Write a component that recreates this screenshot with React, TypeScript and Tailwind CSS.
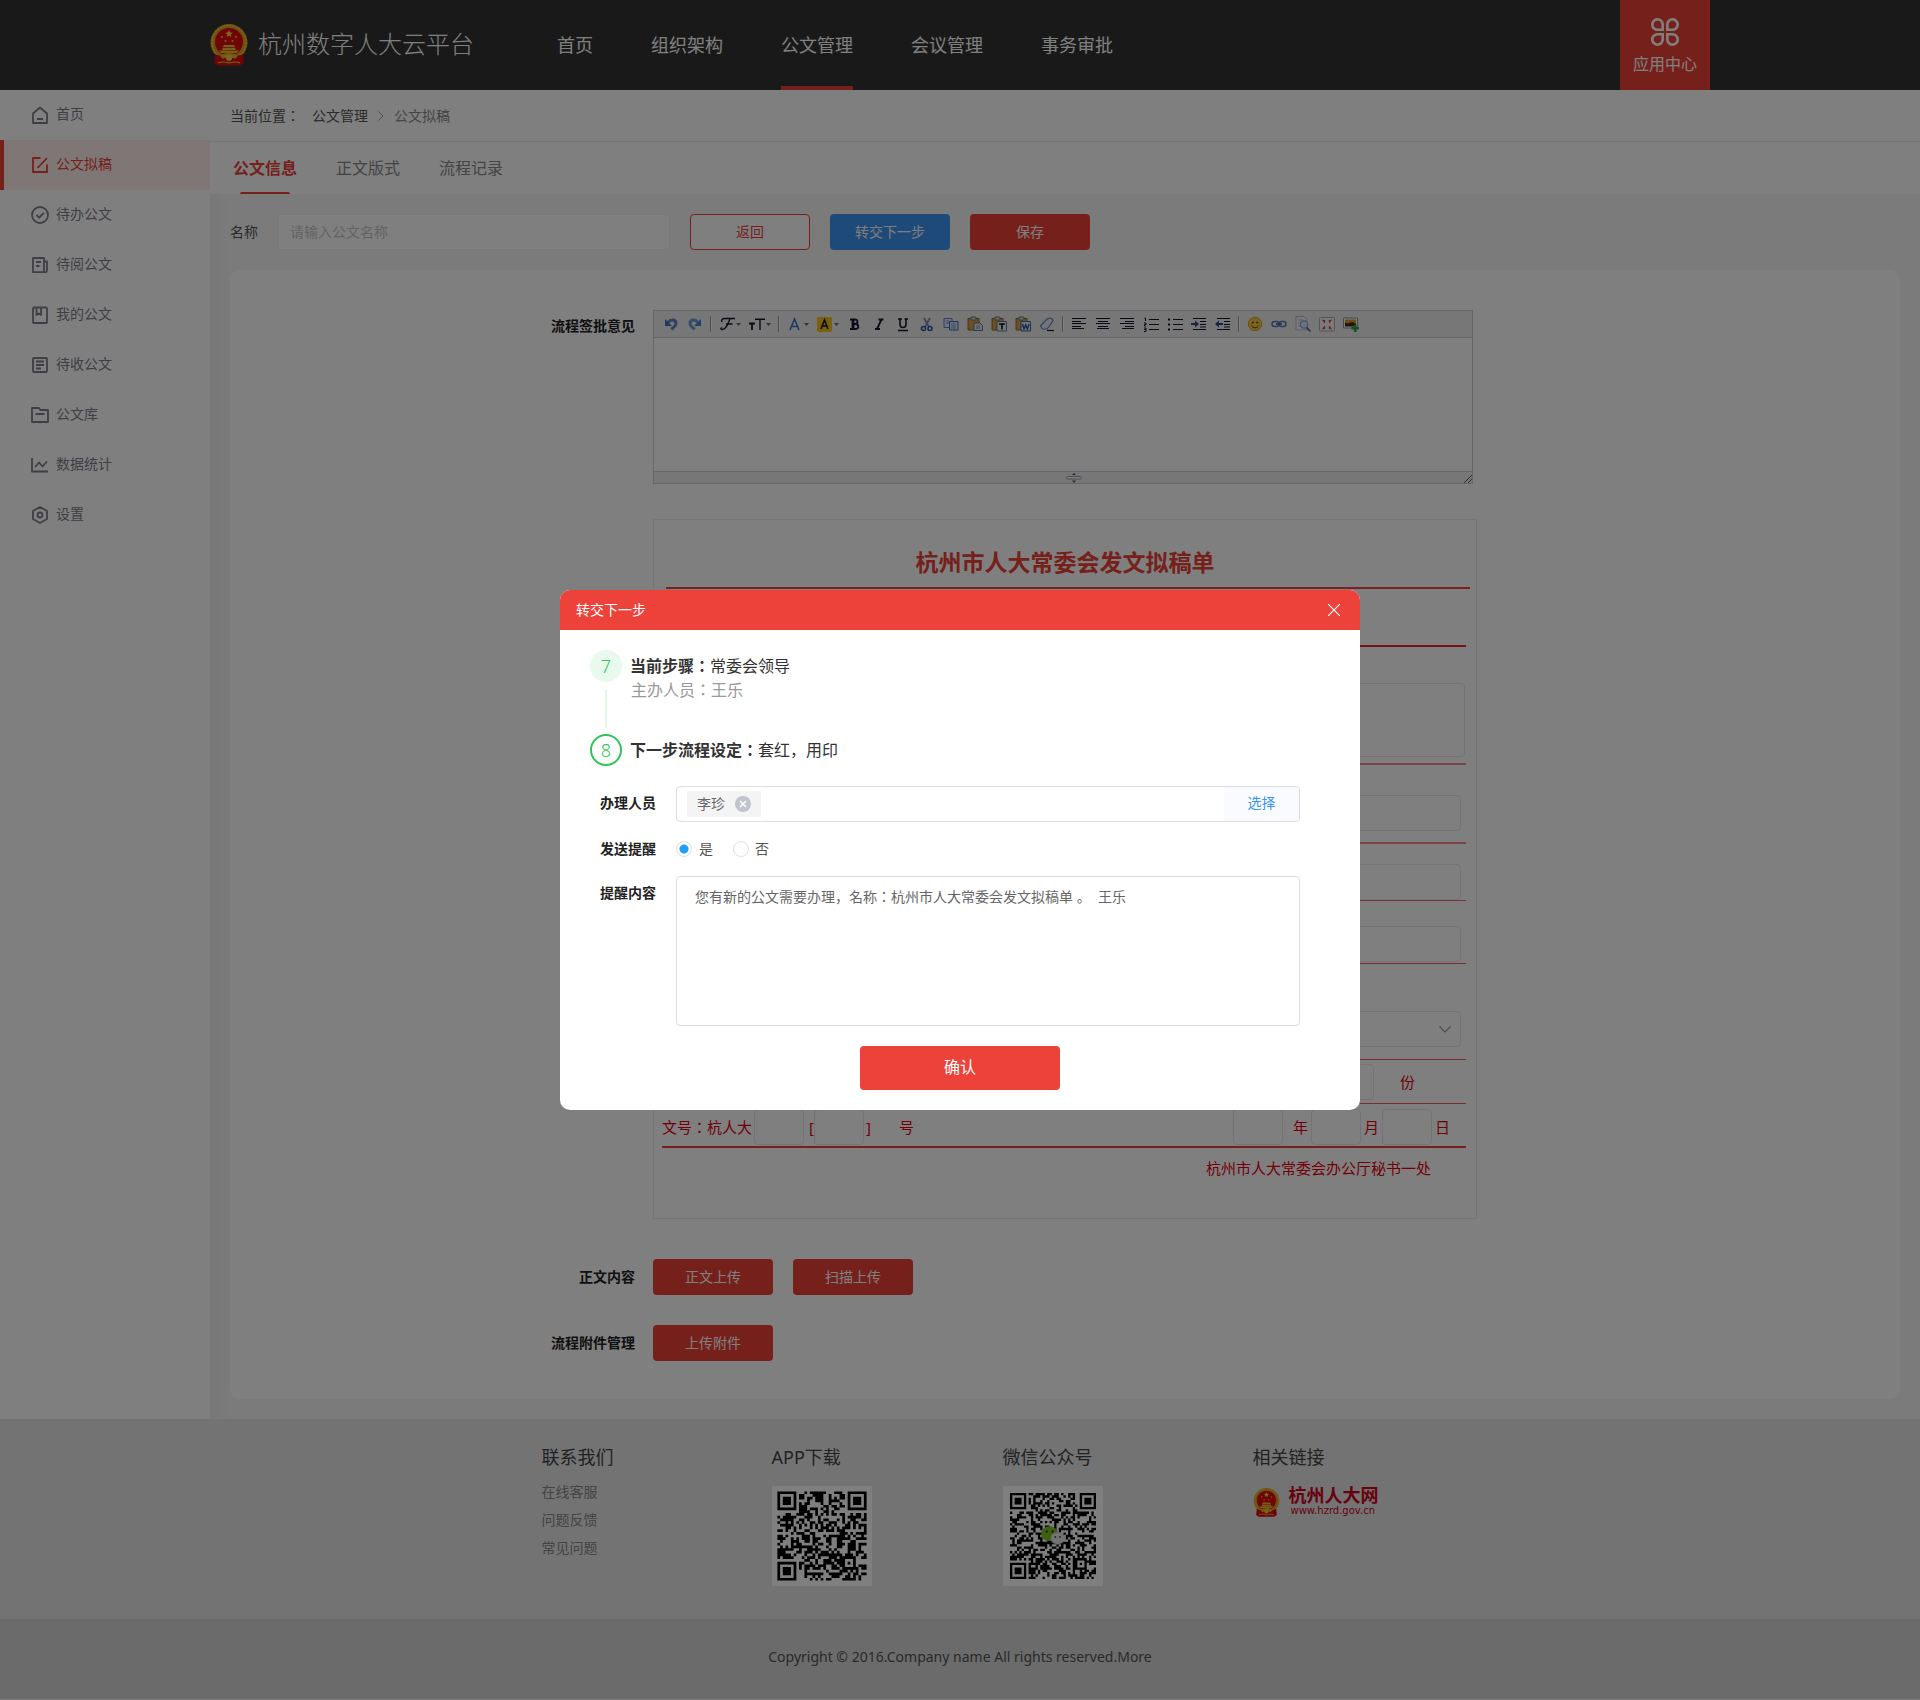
import React from "react";

const FONT = "font-['Noto_Sans','Noto_Sans_CJK_SC',sans-serif]";

/* ---------- Logos ---------- */

function Emblem({ className }: { className: string }) {
  return (
    <svg viewBox="0 0 38 42" className={className} aria-hidden="true">
      <ellipse cx="19" cy="18.5" rx="18.5" ry="18.5" fill="#d9a21b" />
      <ellipse cx="19" cy="18.5" rx="17" ry="17" fill="none" stroke="#f2cf4e" strokeWidth="1.4" strokeDasharray="2 1.2" />
      <circle cx="19" cy="18" r="14" fill="#e00a0a" />
      <path d="M19 6l1.1 2.5 2.7.2-2.1 1.8.7 2.6-2.4-1.4-2.4 1.4.7-2.6-2.1-1.8 2.7-.2z" fill="#f8d23a" />
      <g fill="#e9bd33">
        <circle cx="12" cy="13" r="1" />
        <circle cx="26" cy="13" r="1" />
        <circle cx="15.5" cy="17" r="1" />
        <circle cx="22.5" cy="17" r="1" />
        <path d="M14 21h10l1.5 2.3h-13zM12.5 24h13v2h-13zM9 26.500h20l-2 2.500H11z" />
      </g>
      <path d="M5 30c4 3 24 3 28 0l1 9-4 2.500H8L4 39z" fill="#d90b0b" />
      <path d="M10 32c4-4 14-4 18 0l-3 3c-3-2-9-2-12 0z" fill="#e6b325" />
      <circle cx="19" cy="34" r="3" fill="#f2cf4e" />
      <path d="M8 39c4-2 7-1 11 0 4-1 7-2 11 0" stroke="#f0c63d" strokeWidth="1.2" fill="none" />
    </svg>
  );
}

function QrCode({ size, quiet, seed, label, children }: { size: number; quiet: number; seed: number; label: string; children?: React.ReactNode }) {
  const finder = (x: number, y: number, ox: number, oy: number) => {
    const dx = x - ox;
    const dy = y - oy;
    if (dx < -1 || dy < -1 || dx > 7 || dy > 7) return null;
    if (dx < 0 || dy < 0 || dx > 6 || dy > 6) return false;
    const ring = Math.max(Math.abs(dx - 3), Math.abs(dy - 3));
    return ring !== 2;
  };
  let state = seed;
  let d = "";
  for (let y = 0; y < size; y++) {
    for (let x = 0; x < size; x++) {
      state = (state * 1103515245 + 12345) % 2147483648;
      const a = finder(x, y, 0, 0) ?? finder(x, y, size - 7, 0) ?? finder(x, y, 0, size - 7);
      const ring = Math.max(Math.abs(x - (size - 7)), Math.abs(y - (size - 7)));
      const on = a !== null ? a : ring <= 2 ? ring !== 1 : (state >> 16) % 100 < 52;
      if (on) d += `M${x} ${y}h1v1h-1z`;
    }
  }
  const full = size + quiet * 2;
  return (
    <svg viewBox={`${-quiet} ${-quiet} ${full} ${full}`} className="h-[100px] w-[100px] bg-white" role="img" aria-label={label}>
      <path d={d} fill="#000" />
      {children}
    </svg>
  );
}

/* Full-width colon set in the middle of its square. */
function Colon() {
  return <span className="font-['Noto_Sans_CJK_JP',sans-serif]">：</span>;
}

/* ---------- Sidebar ---------- */

const sideItems: { label: string; icon: React.ReactNode; active?: boolean }[] = [
  { label: "首页", icon: <path d="M2 7.5L9 1.5l7 6v9.500H2zM6 13h6" /> },
  { label: "公文拟稿", active: true, icon: <path d="M9.5 2H2v14h14V8.500M6.500 12L16 2" /> },
  { label: "待办公文", icon: <><circle cx="9" cy="9" r="8" /><path d="M5.500 9l2.700 2.700 4.600-4.900" /></> },
  { label: "待阅公文", icon: <path d="M13 16.200V2H2v14.200h12.500c.800 0 1.500-.700 1.500-1.500V5.500h-3M5 6h5M5 10h3.500" /> },
  { label: "我的公文", icon: <><rect x="2" y="1.500" width="14" height="15.500" rx="1" /><path d="M5.500 2v7l2.200-1.500L10 9V2" /></> },
  { label: "待收公文", icon: <><rect x="2" y="2" width="14" height="14" rx="1" /><path d="M5 5.500h8M5 9h8M5 12.500h5" /></> },
  { label: "公文库", icon: <path d="M1 2h7l1.500 2H17v12H1zM4.500 8h9" /> },
  { label: "数据统计", icon: <path d="M1 2v13.500h16M4 11l4-4.500 3.500 4L16 5.500" /> },
  { label: "设置", icon: <><path d="M9 1l7 4v8l-7 4-7-4V5z" /><circle cx="9" cy="9" r="2.500" /></> },
];

function Sidebar() {
  return (
    <aside className="w-[210px] shrink-0 bg-white">
      <nav aria-label="侧边导航">
        {sideItems.map((it) => (
          <a
            key={it.label}
            href="#"
            className={
              it.active
                ? "flex h-[50px] items-center gap-[7px] border-l-4 border-[#ec4139] bg-[#ffeeed] pl-[27px] text-sm text-[#ec4139]"
                : "flex h-[50px] items-center gap-[7px] border-l-4 border-transparent pl-[27px] text-sm text-[#7d7d8a]"
            }
          >
            <svg viewBox="0 0 18 18" className="h-[18px] w-[18px]" fill="none" stroke="currentColor" strokeWidth="1.8" strokeLinejoin="round">
              {it.icon}
            </svg>
            <span className="pb-[2px]">{it.label}</span>
          </a>
        ))}
      </nav>
    </aside>
  );
}

/* ---------- Editor ---------- */

function Tool({ label, wide, children }: { label: string; wide?: boolean; children: React.ReactNode }) {
  return (
    <button type="button" aria-label={label} className={wide ? "flex h-6 w-[30px] items-center justify-center" : "flex h-6 w-6 items-center justify-center"}>
      <svg viewBox={wide ? "0 0 24 16" : "0 0 16 16"} className={wide ? "h-4 w-6" : "h-4 w-4"} fill="none">
        {children}
      </svg>
    </button>
  );
}

function Sep() {
  return <span className="mx-[3px] h-4 w-[2px] border-l border-[#9a9aac] bg-white" />;
}

const caret = <path d="M18 7h5l-2.500 3z" fill="#667" />;
const clip = (
  <>
    <path d="M1 2.500h11v11.500H1z" fill="#d2a04c" stroke="#8c6a34" />
    <path d="M4 1h5v3H4z" fill="#ded9c8" stroke="#777" />
  </>
);

function Editor() {
  const ink = "#16162e";
  return (
    <div className="w-[820px] border border-[#ccccd6] bg-white">
      <div className="flex h-[27px] items-center border-b border-[#ccccd6] bg-[#eeeeee] pb-px pl-[5px]" role="toolbar" aria-label="编辑工具">
        <Tool label="撤销"><path d="M5 6.500c3-4 8-3 8 1 0 3-3 4-4.500 6" stroke="#5f86cc" strokeWidth="3" /><path d="M2 3v7h7z" fill="#4470c4" /></Tool>
        <Tool label="重做"><path d="M11 6.500C8 2.500 3 3.500 3 7.500c0 3 3 4 4.500 6" stroke="#6c98d6" strokeWidth="3" /><path d="M14 3v7H7z" fill="#4a80cc" /></Tool>
        <Sep />
        <Tool label="字体" wide><path d="M7 2.500h10M12 2.500C10 8 8 14 4 13.500c-2-.300-1-2 0-1.500M8 8h6.500M7 2.500C4 2.500 3 4 4 6" stroke={ink} strokeWidth="1.300" />{caret}</Tool>
        <Tool label="字号" wide><path d="M1 7.500h6M4 7.500V14" stroke={ink} strokeWidth="1.800" /><path d="M7 3.200h10M12 3.200V14" stroke={ink} strokeWidth="1.400" />{caret}</Tool>
        <Sep />
        <Tool label="文字颜色" wide><path d="M4 14L8.500 3 13 14M5.500 10.500h6" stroke="#3a74cc" strokeWidth="1.600" />{caret}</Tool>
        <Tool label="背景颜色" wide><rect x="1" y="1" width="15" height="15" rx="1.500" fill="#f6c21c" /><path d="M5 13l3.500-9L12 13M6 10h5" stroke={ink} strokeWidth="1.600" />{caret}</Tool>
        <Tool label="粗体"><path d="M3 3.500h4.500c4 0 4 4.500 0 4.500H6h2c4.500 0 4.500 5 0 5H3M5.500 3.500V13M6.500 3.500V13" stroke={ink} strokeWidth="1.800" /></Tool>
        <Tool label="斜体"><path d="M7.500 3.500h5M4 13h5M10.500 3.500L6 13" stroke={ink} strokeWidth="1.800" /></Tool>
        <Tool label="下划线"><path d="M3 3h4M9.500 3H13M5 3v5.500c0 4 6 4 6 0V3M3 14.500h10" stroke={ink} strokeWidth="1.600" /></Tool>
        <Tool label="剪切"><path d="M5 2l5 9M11 2L6 11" stroke="#7889b4" strokeWidth="1.800" /><circle cx="4.500" cy="12.500" r="2" stroke="#3053a8" strokeWidth="1.600" /><circle cx="11" cy="12.500" r="2" stroke="#3053a8" strokeWidth="1.600" /></Tool>
        <Tool label="复制"><path d="M1 2.500h8v9H1z" fill="#dfe9f8" stroke="#6280bd" /><path d="M6.500 5.500h8.500V14H6.500z" fill="#dfe9f8" stroke="#3d64b4" /><path d="M8 8h5M8 10h5M8 12h5M3 5h3M3 7h3" stroke="#6f93d0" /></Tool>
        <Tool label="粘贴">{clip}<path d="M7 7h6l2.500 2.500v5H7z" fill="#dfe6f2" stroke="#65728e" /><path d="M9 10h4M9 12h4" stroke="#8593b0" /></Tool>
        <Tool label="粘贴为文本">{clip}<path d="M6 5.500h9.500v9.500H6z" fill="#e9eef5" stroke="#65728e" /><path d="M8 8h6M11 8v5.500" stroke="#111" strokeWidth="1.600" /></Tool>
        <Tool label="从 Word 粘贴">{clip}<path d="M6 5.500h9.500v9.500H6z" fill="#e9eef5" stroke="#3d64b4" /><path d="M7.500 8l1.500 5 1.700-4 1.700 4L14 8" stroke="#2c55a8" strokeWidth="1.500" /></Tool>
        <Tool label="清除格式"><path d="M1.500 10L8 3c1-1 6-1 6 1.500 0 1-5 7.500-6 8.500H3.500z" fill="#e4ebf7" stroke="#6f88b8" strokeWidth="1.200" /><path d="M8 14.500h7" stroke={ink} strokeWidth="1.200" /></Tool>
        <Sep />
        <Tool label="左对齐"><path d="M1 2.500h14M1 5.500h9M1 7.500h14M1 10.500h9M1 12.500h12" stroke={ink} /></Tool>
        <Tool label="居中"><path d="M1 2.500h14M3 5.500h10M1 7.500h14M3 10.500h10M2 12.500h12" stroke={ink} /></Tool>
        <Tool label="右对齐"><path d="M1 2.500h14M6 5.500h9M1 7.500h14M6 10.500h9M3 12.500h12" stroke={ink} /></Tool>
        <Tool label="有序列表"><path d="M6 3.500h10M6 8.500h10M6 13.500h10M1.500 2h1v3M1 7h2v1.500H1.500V10H3M1 12h2v1.500H1.500h1.500V15.500H1" stroke={ink} /></Tool>
        <Tool label="无序列表"><path d="M6 3.500h10M6 8.500h10M6 13.500h10" stroke={ink} /><path d="M1 2.500h2v2H1zM1 7.500h2v2H1zM1 12.500h2v2H1z" fill={ink} /></Tool>
        <Tool label="增加缩进"><path d="M2 2.500h13M9 5.500h6M9 8.500h6M9 11h6M2 13.500h13" stroke={ink} strokeWidth="1.200" /><path d="M0 7h4V4.500L8 8l-4 3.500V9H0z" fill="#33458f" /></Tool>
        <Tool label="减少缩进"><path d="M2 2.500h13M9 5.500h6M9 8.500h6M9 11h6M2 13.500h13" stroke={ink} strokeWidth="1.200" /><path d="M8 7H4V4.500L0 8l4 3.500V9h4z" fill="#33458f" /></Tool>
        <Sep />
        <Tool label="表情"><circle cx="8" cy="8" r="6.700" fill="#fbc93c" stroke="#d89a2a" /><circle cx="5.800" cy="6.500" r="1" fill="#5a3a10" /><circle cx="10.200" cy="6.500" r="1" fill="#5a3a10" /><path d="M4.500 9.500c1.500 3 5.500 3 7 0" stroke="#5a3a10" /></Tool>
        <Tool label="超链接"><rect x="1" y="5.500" width="7" height="5" rx="2.500" stroke="#5878b4" strokeWidth="1.500" /><rect x="8" y="5.500" width="7" height="5" rx="2.500" stroke="#5878b4" strokeWidth="1.500" /><path d="M5 8h6" stroke="#3f5e9a" strokeWidth="1.600" /></Tool>
        <Tool label="预览"><path d="M1 .500h8l3 3V14H1z" fill="#f4f5fa" stroke="#b4bdd2" /><path d="M3 4h5M3 7h3M3 10h2" stroke="#b4bdd2" /><circle cx="9" cy="8.500" r="3.700" fill="#d8e5f6" stroke="#8fa3cc" strokeWidth="1.200" /><path d="M11.500 11.500l4 4" stroke="#67759a" strokeWidth="1.800" /></Tool>
        <Tool label="全屏"><rect x=".500" y="1.500" width="15" height="13.500" rx="1" fill="#f4f4f6" stroke="#a8a8b8" /><path d="M3 3.500l3.500 1L5.500 7.500zM13 3.500l-3.500 1 1 3zM3 13.500l3.500-1-1-3zM13 13.500l-3.500-1 1-3z" fill="#d2344c" /></Tool>
        <Tool label="图片"><path d="M.500 2h14v10H.500z" fill="#fff" stroke="#8492b0" /><path d="M2 3.500h11v4H2z" fill="#e2941e" /><path d="M2 6.500l3 1 4-1.500 4 1.500v3H2z" fill="#3a2c12" /><path d="M11 8.500h2.500V11H16v2.500h-2.500V16H11v-2.500H8.500V11H11z" fill="#2fa045" /></Tool>
      </div>
      <textarea id="opinion" className="block h-[133px] w-full resize-none px-2 py-1 text-sm outline-none" />
      <div className="relative flex h-[12px] items-center justify-center border-t border-[#ccccd6] bg-[#eeeeee]">
        <svg viewBox="0 0 16 10" className="ml-[22px] h-[10px] w-4" fill="none">
          <path d="M8 0l2 2H6zM8 10l2-2.500H6z" fill="#556" />
          <rect x=".500" y="3.500" width="15" height="2.500" rx="1" stroke="#99a" fill="#fff" />
        </svg>
        <svg viewBox="0 0 8 8" className="absolute right-0 bottom-0 h-2 w-2" fill="none">
          <path d="M0 8l8-8M4 8l4-4" stroke="#556" />
        </svg>
      </div>
    </div>
  );
}

/* ---------- Draft sheet ---------- */

const box = "rounded border border-[#e6e8f0] bg-white outline-none px-2 text-sm";

function DraftSheet() {
  return (
    <div className="h-[700px] border border-[#ebebeb] text-[15px] leading-5 text-[#e60012]">
      <h2 className="flex h-[67px] items-center justify-center pt-4 text-[23px] font-bold text-[#ec4139]">杭州市人大常委会发文拟稿单</h2>
      <div className="mr-[6px] ml-3 border-b-2 border-[#f04444]" />
      <div className="mr-[10px] ml-2">
        <div className="h-[58px] border-b-2 border-[#e62a2a]" />
        <div className="flex h-[118px] justify-end border-b-2 border-[#f98a8a] pt-9 pr-px">
          <textarea aria-label="标题" className={`${box} h-[74px] w-[700px] resize-none`} />
        </div>
        <div className="flex h-[79px] justify-end border-b-2 border-[#f98a8a] pt-[30px] pr-[5px]">
          <input aria-label="主送" className={`${box} h-9 w-[696px]`} />
        </div>
        <div className="flex h-[57px] justify-end border-b border-[#f46a6a] pt-5 pr-[5px]">
          <input aria-label="抄送" className={`${box} h-9 w-[696px]`} />
        </div>
        <div className="flex h-[63px] justify-end border-b border-[#f25c5c] pt-[25px] pr-[5px]">
          <input aria-label="拟稿单位" className={`${box} h-9 w-[696px]`} />
        </div>
        <div className="flex h-[96px] justify-end border-b border-[#f25c5c] pt-[47px] pr-[5px]">
          <div className="relative w-[300px]">
            <select aria-label="密级" className={`${box} h-9 w-full appearance-none`} />
            <svg viewBox="0 0 12 7" className="pointer-events-none absolute top-[15px] right-[10px] h-[7px] w-3" fill="none" stroke="#999" strokeWidth="1.200">
              <path d="M.500 .500L6 6 11.500 .500" />
            </svg>
          </div>
        </div>
        <div className="flex h-[44px] justify-end border-b border-[#f25c5c] pt-1 pr-[51px]">
          <label className="flex h-9 items-center gap-[26px]">
            <input aria-label="份数" className={`${box} h-9 w-[100px]`} />
            份
          </label>
        </div>
        <div className="flex h-[44px] items-center border-b-2 border-[#ee3c3c] pt-[3px] pr-4">
          <label htmlFor="doc-word">文号<Colon />杭人大</label>
          <input id="doc-word" className={`${box} ml-[2px] h-9 w-[50px]`} />
          <span className="ml-[5px]">[</span>
          <input aria-label="年份" className={`${box} h-9 w-[50px]`} />
          <span className="ml-[2px]">]</span>
          <span className="ml-7">号</span>
          <input aria-label="年" className={`${box} ml-auto h-9 w-[50px]`} />
          <span className="ml-[10px]">年</span>
          <input aria-label="月" className={`${box} ml-[3px] h-9 w-[50px]`} />
          <span className="ml-[3px]">月</span>
          <input aria-label="日" className={`${box} ml-[3px] h-9 w-[50px]`} />
          <span className="ml-[3px]">日</span>
        </div>
        <p className="pt-[10px] pr-[35px] text-right">杭州市人大常委会办公厅秘书一处</p>
      </div>
    </div>
  );
}

const redBtn = "h-9 w-[120px] rounded bg-[#ec4139] text-sm text-white";

/* ---------- Dialog ---------- */

function ForwardDialog() {
  return (
    <div className="fixed inset-0 flex items-center justify-center bg-black/50">
      <form role="dialog" aria-modal="true" aria-labelledby="dlg-title" className="w-[800px] overflow-hidden rounded-[10px] bg-white pb-5">
        <div className="flex h-10 items-center justify-between bg-[#ed4239] pr-5 pl-4 text-white">
          <h2 id="dlg-title" className="text-sm">转交下一步</h2>
          <button type="button" aria-label="关闭">
            <svg viewBox="0 0 12 12" className="h-3 w-3" stroke="currentColor" strokeWidth="1.200">
              <path d="M0 0l12 12M12 0L0 12" />
            </svg>
          </button>
        </div>
        <ol className="px-[30px] pt-5 text-base text-[#333]">
          <li className="flex h-[84px] gap-2">
            <div className="flex w-8 flex-col items-center">
              <span className="flex h-8 w-8 items-center justify-center rounded-full bg-[#e8f9ed] text-lg font-light text-[#2fc456]">7</span>
              <span className="mt-2 h-[38px] w-[2px] bg-[#e3f7e9]" />
            </div>
            <div>
              <p className="leading-[30px]"><b>当前步骤<Colon /></b>常委会领导</p>
              <p className="pl-px leading-4 text-[#999]">主办人员<Colon />王乐</p>
            </div>
          </li>
          <li className="flex h-8 gap-2">
            <span className="flex h-8 w-8 items-center justify-center rounded-full border-2 border-[#2fc456] text-lg font-light text-[#2fc456]">8</span>
            <p className="leading-[30px]"><b>下一步流程设定<Colon /></b>套红，用印</p>
          </li>
        </ol>
        <div className="grid grid-cols-[56px_1fr] gap-x-5 pt-5 pr-[60px] pl-10 text-sm">
          <label htmlFor="handler" className="leading-[34px] font-bold text-[#222]">办理人员</label>
          <div className="flex h-9 items-center overflow-hidden rounded border border-[#dcdcdc] pl-[10px]">
            <span className="flex h-[26px] items-center gap-[10px] bg-[#f4f4f5] px-[10px] text-[#666]">
              李珍
              <button type="button" aria-label="移除李珍">
                <svg viewBox="0 0 16 16" className="h-4 w-4">
                  <circle cx="8" cy="8" r="8" fill="#c0c4cc" />
                  <path d="M5 5l6 6M11 5l-6 6" stroke="#fff" strokeWidth="1.500" />
                </svg>
              </button>
            </span>
            <input id="handler" className="h-full min-w-0 flex-1 outline-none" />
            <button type="button" className="h-full w-[75px] bg-[#fafbfe] pb-[2px] text-[#3b94f1]">选择</button>
          </div>
          <span className="mt-[10px] leading-[34px] font-bold text-[#222]">发送提醒</span>
          <div className="mt-[10px] flex h-[34px] items-center gap-5 text-[#555]">
            <label className="flex items-center gap-[7px]">
              <input type="radio" name="remind" defaultChecked className="h-4 w-4 appearance-none rounded-full border border-[#dcdfe6] bg-white checked:bg-[radial-gradient(circle,#1e9fff_0_4px,transparent_5px)]" />
              是
            </label>
            <label className="flex items-center gap-[6px]">
              <input type="radio" name="remind" className="h-4 w-4 appearance-none rounded-full border border-[#dcdfe6] bg-white checked:bg-[radial-gradient(circle,#1e9fff_0_4px,transparent_5px)]" />
              否
            </label>
          </div>
          <label htmlFor="remind-text" className="mt-[10px] leading-[34px] font-bold text-[#222]">提醒内容</label>
          <textarea
            id="remind-text"
            defaultValue={"您有新的公文需要办理，名称：杭州市人大常委会发文拟稿单 。  王乐"}
            className="mt-[10px] h-[150px] resize-none rounded border border-[#dcdcdc] px-[18px] py-[10px] font-['Noto_Sans','Noto_Sans_CJK_JP','Noto_Sans_CJK_SC',sans-serif] leading-5 text-[#666] outline-none"
          />
        </div>
        <div className="mt-5 flex justify-center">
          <button type="button" className="h-11 w-[200px] rounded bg-[#ed4239] pb-[2px] text-base text-white">确认</button>
        </div>
      </form>
    </div>
  );
}

/* ---------- Page ---------- */

export default function App() {
  return (
    <div className={`${FONT} min-h-screen bg-[#f7f7f7]`}>
      <header className="flex h-[90px] justify-center bg-[#333]">
        <div className="flex w-[1500px] items-center">
          <Emblem className="h-[42px] w-[38px]" />
          <h1 className="ml-[10px] pb-[2px] text-2xl font-light text-white">杭州数字人大云平台</h1>
          <nav className="ml-[83px] flex h-full gap-[58px] text-lg text-white" aria-label="主导航">
            <a href="#" className="flex items-center">首页</a>
            <a href="#" className="flex items-center">组织架构</a>
            <a href="#" className="flex items-center border-y-4 border-t-transparent border-b-[#ec4139]">公文管理</a>
            <a href="#" className="flex items-center">会议管理</a>
            <a href="#" className="flex items-center">事务审批</a>
          </nav>
          <a href="#" className="ml-auto flex h-full w-[90px] flex-col items-center bg-[#ec4139] pt-[18px] text-base leading-5 text-white">
            <svg viewBox="0 0 28 28" className="mb-2 h-7 w-7" fill="none" stroke="currentColor" strokeWidth="2.600">
              <path d="M11.700 11.700H7a5.200 5.200 0 1 1 4.700-5.200zM16.300 11.700V6.500a5.200 5.200 0 1 1 4.700 5.200zM11.700 16.300v5.200a5.200 5.200 0 1 1-4.700-5.200zM16.300 16.300H21a5.200 5.200 0 1 1-4.700 5.200z" />
            </svg>
            应用中心
          </a>
        </div>
      </header>

      <div className="flex">
        <Sidebar />
        <main className="min-w-0 flex-1">
          <div className="flex h-[52px] items-center border-b border-[#ebebeb] bg-white pl-5 text-sm text-[#555]">
            <span>当前位置<Colon /></span>
            <a href="#" className="ml-3">公文管理</a>
            <svg viewBox="0 0 6 10" className="mx-[10px] h-[10px] w-[6px]" fill="none" stroke="#999">
              <path d="M.500 .500L5 5 .500 9.500" />
            </svg>
            <span className="text-[#888]">公文拟稿</span>
          </div>
          <div className="flex h-[52px] gap-[39px] bg-white pl-[23px] text-base text-[#888]" role="tablist">
            <button type="button" role="tab" aria-selected="true" className="flex flex-col items-center font-bold text-[#ec4139]">
              <span className="flex flex-1 items-center pt-[2px]">公文信息</span>
              <span className="h-[2px] w-[50px] rounded-t bg-[#ec4139]" />
            </button>
            <button type="button" role="tab" aria-selected="false">正文版式</button>
            <button type="button" role="tab" aria-selected="false">流程记录</button>
          </div>

          <div className="bg-[linear-gradient(to_right,#efefef,#f7f7f7_20px)] p-5">
            <div className="flex items-center text-sm text-[#555]">
              <label htmlFor="doc-name">名称</label>
              <input id="doc-name" placeholder="请输入公文名称" className="ml-5 h-9 w-[392px] rounded border border-[#f2f2f2] bg-white px-[11px] pb-[2px] outline-none placeholder:text-[#c6c6c6]" />
              <button type="button" className="ml-5 h-9 w-[120px] rounded border border-[#ec4139] bg-white text-[#ec4139]">返回</button>
              <button type="button" className="ml-5 h-9 w-[120px] rounded bg-[#3b94f1] text-white">转交下一步</button>
              <button type="button" className={`${redBtn} ml-5`}>保存</button>
            </div>

            <div className="mt-5 grid grid-cols-[1fr_824px_1fr] gap-x-[18px] rounded-[10px] bg-white pt-10 pb-[38px] text-sm">
              <label htmlFor="opinion" className="text-right leading-8 font-bold text-[#222]">流程签批意见</label>
              <Editor />
              <span />
              <div className="col-start-2 mt-[35px]">
                <DraftSheet />
              </div>
              <span />
              <span className="mt-10 text-right leading-9 font-bold text-[#222]">正文内容</span>
              <div className="mt-10 flex gap-5">
                <button type="button" className={redBtn}>正文上传</button>
                <button type="button" className={redBtn}>扫描上传</button>
              </div>
              <span />
              <span className="mt-[30px] text-right leading-9 font-bold text-[#222]">流程附件管理</span>
              <div className="mt-[30px]">
                <button type="button" className={redBtn}>上传附件</button>
              </div>
            </div>
          </div>
        </main>
      </div>

      <footer>
        <div className="flex h-[200px] justify-center bg-[#e6e6e6] pt-6 text-sm text-[#888]">
          <div className="w-[230px]">
            <h3 className="text-lg text-[#444]">联系我们</h3>
            <ul className="mt-[7px] leading-7">
              <li><a href="#">在线客服</a></li>
              <li><a href="#">问题反馈</a></li>
              <li><a href="#">常见问题</a></li>
            </ul>
          </div>
          <div className="w-[231px]">
            <h3 className="mb-[15px] text-lg text-[#444]">APP下载</h3>
            <QrCode size={33} quiet={2} seed={20163} label="APP下载二维码" />
          </div>
          <div className="w-[250px]">
            <h3 className="mb-[15px] text-lg text-[#444]">微信公众号</h3>
            <QrCode size={37} quiet={3} seed={7741} label="微信公众号二维码">
              <ellipse cx="17" cy="17.500" rx="3.600" ry="3.200" fill="#7cc21c" />
              <ellipse cx="20.500" cy="19.500" rx="3" ry="2.600" fill="#e6e6e6" stroke="#bbb" strokeWidth=".200" />
              <circle cx="15.800" cy="16.600" r=".500" fill="#222" />
              <circle cx="18.300" cy="16.600" r=".500" fill="#222" />
              <circle cx="19.500" cy="18.900" r=".400" fill="#444" />
              <circle cx="21.500" cy="18.900" r=".400" fill="#444" />
            </QrCode>
          </div>
          <div className="w-[126px]">
            <h3 className="mb-[15px] text-lg text-[#444]">相关链接</h3>
            <a href="#" className="flex items-center gap-[9px] whitespace-nowrap text-[#d0021b]">
              <Emblem className="h-[29px] w-[27px] shrink-0" />
              <span className="flex flex-col">
                <b className="text-lg leading-[18px]">杭州人大网</b>
                <span className="pl-[2px] font-['DejaVu_Sans',sans-serif] text-[10px] leading-[14px]">www.hzrd.gov.cn</span>
              </span>
            </a>
          </div>
        </div>
        <div className="flex h-20 items-center justify-center bg-[#d6d6d6] pb-1 text-sm text-[#555]">
          Copyright © 2016.Company name All rights reserved.More
        </div>
      </footer>

      <ForwardDialog />
    </div>
  );
}
